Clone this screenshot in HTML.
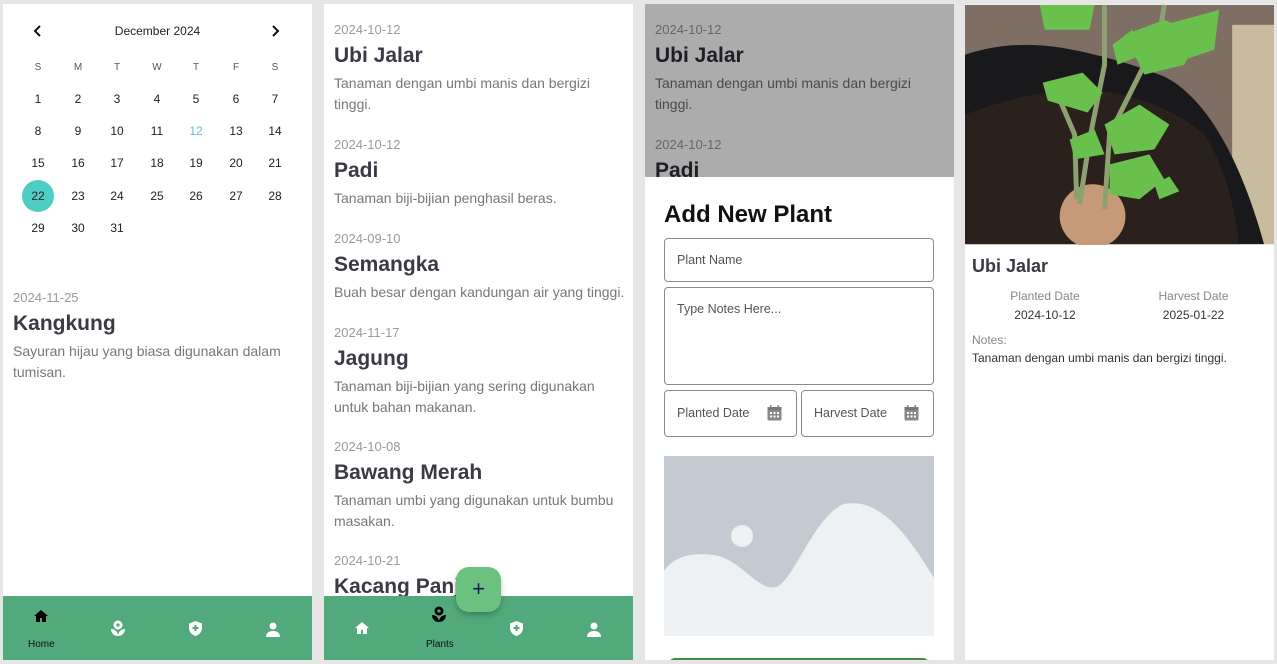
<!DOCTYPE html>
<html><head><meta charset="utf-8"><style>
*{margin:0;padding:0;box-sizing:border-box}
body{width:1277px;height:664px;background:#e6e6e6;position:relative;overflow:hidden;font-family:"Liberation Sans",sans-serif}
.p{position:absolute;top:4px;width:309px;height:656px;background:#fff;overflow:hidden}
.a{position:absolute;white-space:nowrap}
.c{position:absolute;width:30px;text-align:center;font-size:12px;color:#222}
.dt{font-size:13px;color:#9a9a9a}
.tt{font-size:21px;font-weight:bold;color:#3a3a44}
.ds{font-size:14px;color:#777;line-height:21px;white-space:normal}
.nav{position:absolute;left:0;top:592px;width:309px;height:64px;background:#52aa7c}
.inp{position:absolute;border:1px solid #8a8a8a;border-radius:4px;font-size:12.5px;color:#555}
</style></head><body>

<!-- Panel 1 -->
<div class="p" style="left:3px">
 <svg class="a" style="left:29px;top:20px" width="12" height="14" viewBox="0 0 12 14"><path d="M8 2L3 7l5 5" stroke="#111" stroke-width="2" fill="none"/></svg>
 <svg class="a" style="left:266px;top:20px" width="12" height="14" viewBox="0 0 12 14"><path d="M4 2l5 5-5 5" stroke="#111" stroke-width="2" fill="none"/></svg>
 <div class="a" style="left:0;width:309px;text-align:center;top:20px;font-size:12px;color:#222">December 2024</div>
 <div id="cal"></div>
 <div class="a" style="left:19px;top:176px;width:32px;height:32px;border-radius:50%;background:#4ecdc4"></div>
 <div class="a dt" style="left:10px;top:286px">2024-11-25</div>
 <div class="a tt" style="left:10px;top:308px">Kangkung</div>
 <div class="a ds" style="left:10px;top:337px;width:280px">Sayuran hijau yang biasa digunakan dalam tumisan.</div>
 <div class="nav">
  <svg class="a" style="left:30px;top:13px" width="16" height="14" viewBox="0 0 16 14"><path d="M8 1L1 7h2v6h4V9h2v4h4V7h2z" fill="#000"/></svg>
  <div class="a" style="left:25px;top:43px;font-size:10px;color:#111">Home</div>
  <svg class="a" style="left:107px;top:24px" width="16" height="17" viewBox="0 0 16 17"><circle cx="8" cy="5" r="4.5" fill="#fff"/><circle cx="8" cy="5" r="1.6" fill="#52aa7c"/><path d="M1 9c4 0 7 3 7 7-4 0-7-3-7-7zM15 9c-4 0-7 3-7 7 4 0 7-3 7-7z" fill="#fff"/></svg>
  <svg class="a" style="left:185px;top:24px" width="15" height="17" viewBox="0 0 15 17"><path d="M7.5 1L1 3.5v4.5c0 4 3 7 6.5 8 3.5-1 6.5-4 6.5-8V3.5z" fill="#fff"/><path d="M7.5 5v6M4.5 8h6" stroke="#52aa7c" stroke-width="2"/></svg>
  <svg class="a" style="left:262px;top:26px" width="16" height="15" viewBox="0 0 16 15"><circle cx="8" cy="4" r="3.5" fill="#fff"/><path d="M1 15c0-4 3-6 7-6s7 2 7 6z" fill="#fff"/></svg>
 </div>
</div>

<!-- Panel 2 -->
<div class="p" style="left:324px">
 <div class="a dt" style="left:10px;top:18px">2024-10-12</div>
 <div class="a tt" style="left:10px;top:40px">Ubi Jalar</div>
 <div class="a ds" style="left:10px;top:69px;width:270px">Tanaman dengan umbi manis dan bergizi tinggi.</div>
 <div class="a dt" style="left:10px;top:133px">2024-10-12</div>
 <div class="a tt" style="left:10px;top:155px">Padi</div>
 <div class="a ds" style="left:10px;top:184px;width:290px">Tanaman biji-bijian penghasil beras.</div>
 <div class="a dt" style="left:10px;top:227px">2024-09-10</div>
 <div class="a tt" style="left:10px;top:249px">Semangka</div>
 <div class="a ds" style="left:10px;top:278px;width:300px">Buah besar dengan kandungan air yang tinggi.</div>
 <div class="a dt" style="left:10px;top:321px">2024-11-17</div>
 <div class="a tt" style="left:10px;top:343px">Jagung</div>
 <div class="a ds" style="left:10px;top:372px;width:275px">Tanaman biji-bijian yang sering digunakan untuk bahan makanan.</div>
 <div class="a dt" style="left:10px;top:435px">2024-10-08</div>
 <div class="a tt" style="left:10px;top:457px">Bawang Merah</div>
 <div class="a ds" style="left:10px;top:486px;width:285px">Tanaman umbi yang digunakan untuk bumbu masakan.</div>
 <div class="a dt" style="left:10px;top:549px">2024-10-21</div>
 <div class="a tt" style="left:10px;top:571px">Kacang Panjang</div>
 <div class="nav">
  <svg class="a" style="left:30px;top:25px" width="16" height="14" viewBox="0 0 16 14"><path d="M8 1L1 7h2v6h4V9h2v4h4V7h2z" fill="#fff"/></svg>
  <svg class="a" style="left:107px;top:10px" width="16" height="17" viewBox="0 0 16 17"><circle cx="8" cy="5" r="4.5" fill="#000"/><circle cx="8" cy="5" r="1.6" fill="#52aa7c"/><path d="M1 9c4 0 7 3 7 7-4 0-7-3-7-7zM15 9c-4 0-7 3-7 7 4 0 7-3 7-7z" fill="#000"/></svg>
  <div class="a" style="left:102px;top:43px;font-size:10px;color:#111">Plants</div>
  <svg class="a" style="left:185px;top:24px" width="15" height="17" viewBox="0 0 15 17"><path d="M7.5 1L1 3.5v4.5c0 4 3 7 6.5 8 3.5-1 6.5-4 6.5-8V3.5z" fill="#fff"/><path d="M7.5 5v6M4.5 8h6" stroke="#52aa7c" stroke-width="2"/></svg>
  <svg class="a" style="left:262px;top:26px" width="16" height="15" viewBox="0 0 16 15"><circle cx="8" cy="4" r="3.5" fill="#fff"/><path d="M1 15c0-4 3-6 7-6s7 2 7 6z" fill="#fff"/></svg>
 </div>
 <div class="a" style="left:132px;top:563px;width:45px;height:45px;border-radius:13px;background:#6dc180;box-shadow:0 3px 6px rgba(0,0,0,.25);text-align:center;line-height:44px;font-size:22px;color:#1a1a5a">+</div>
</div>

<!-- Panel 3 -->
<div class="p" style="left:645px">
 <div class="a" style="left:0;top:0;width:309px;height:173px;background:#acacac;overflow:hidden">
  <div class="a dt" style="left:10px;top:18px;color:#666">2024-10-12</div>
  <div class="a tt" style="left:10px;top:40px;color:#1e1e24">Ubi Jalar</div>
  <div class="a ds" style="left:10px;top:69px;width:270px;color:#4a4a4a">Tanaman dengan umbi manis dan bergizi tinggi.</div>
  <div class="a dt" style="left:10px;top:133px;color:#666">2024-10-12</div>
  <div class="a tt" style="left:10px;top:155px;color:#1e1e24">Padi</div>
 </div>
 <div class="a" style="left:19px;top:197px;font-size:24px;font-weight:bold;color:#111">Add New Plant</div>
 <div class="inp" style="left:19px;top:234px;width:270px;height:44px;padding:14px 12px">Plant Name</div>
 <div class="inp" style="left:19px;top:283px;width:270px;height:98px;padding:14px 12px">Type Notes Here...</div>
 <div class="inp" style="left:19px;top:386px;width:133px;height:47px;padding:15px 12px">Planted Date</div>
 <div class="inp" style="left:156px;top:386px;width:133px;height:47px;padding:15px 12px">Harvest Date</div>
 <svg class="a" style="left:122px;top:401px" width="15" height="16" viewBox="0 0 15 16"><rect x="0.5" y="2" width="14" height="13.5" rx="1.5" fill="#888"/><rect x="0.5" y="2" width="14" height="3" fill="#777"/><g fill="#fff"><rect x="3" y="7" width="2" height="2"/><rect x="6.5" y="7" width="2" height="2"/><rect x="10" y="7" width="2" height="2"/><rect x="3" y="10.5" width="2" height="2"/><rect x="6.5" y="10.5" width="2" height="2"/><rect x="10" y="10.5" width="2" height="2"/></g><rect x="3" y="0" width="1.5" height="3" fill="#888"/><rect x="10.5" y="0" width="1.5" height="3" fill="#888"/></svg>
 <svg class="a" style="left:259px;top:401px" width="15" height="16" viewBox="0 0 15 16"><rect x="0.5" y="2" width="14" height="13.5" rx="1.5" fill="#888"/><rect x="0.5" y="2" width="14" height="3" fill="#777"/><g fill="#fff"><rect x="3" y="7" width="2" height="2"/><rect x="6.5" y="7" width="2" height="2"/><rect x="10" y="7" width="2" height="2"/><rect x="3" y="10.5" width="2" height="2"/><rect x="6.5" y="10.5" width="2" height="2"/><rect x="10" y="10.5" width="2" height="2"/></g><rect x="3" y="0" width="1.5" height="3" fill="#888"/><rect x="10.5" y="0" width="1.5" height="3" fill="#888"/></svg>
 <svg class="a" style="left:19px;top:452px" width="270" height="180" viewBox="0 0 270 180"><rect width="270" height="180" fill="#c3cad1"/><circle cx="78" cy="80" r="11" fill="#eef1f4"/><path d="M0 115C10 100 30 95 55 100 80 108 95 135 112 131 130 125 150 60 180 48 220 40 250 90 270 122V180H0z" fill="#eef1f4"/></svg>
 <div class="a" style="left:24px;top:654px;width:260px;height:12px;border-radius:10px;background:#3e8e3a"></div>
</div>

<!-- Panel 4 -->
<div class="p" style="left:965px">
 <svg class="a" style="left:0;top:0" width="309" height="241" viewBox="0 0 310 240">
  <rect width="310" height="240" fill="#7e6e64"/>
  <rect x="268" y="20" width="42" height="220" fill="#c9bb9e"/>
  <path d="M0 50C30 40 60 38 90 42 130 48 170 60 200 72 240 92 275 150 300 240H0z" fill="#19191b"/>
  <path d="M0 110C40 95 80 85 120 85 170 88 210 105 240 130 260 160 270 200 275 240H0z" fill="#2a201c"/>
  <ellipse cx="128" cy="212" rx="33" ry="32" fill="#c69a78"/>
  <g stroke="#8ca070" stroke-width="5" fill="none"><path d="M115 200L125 135 140 60 140 0"/><path d="M140 205L145 130 195 30 200 0"/><path d="M112 195L110 130 95 95"/></g>
  <g fill="#6ac04c">
   <path d="M78 78l40-10 20 20-15 20-40-12z"/><path d="M160 30l40-15 35 15-15 30-40 10z"/><path d="M200 20l55-15-5 40-30 10z"/>
   <path d="M140 120l35-20 30 20-15 25-40 5z"/><path d="M105 135l25-10 10 25-30 5z"/><path d="M145 160l40-10 15 25-25 20-30-5z"/>
   <path d="M75 0l55 0-5 25-45 0z"/><path d="M190 180l15-8 10 15-20 8z"/><path d="M148 40l20-15 10 25-25 10z"/>
  </g>
 </svg>
 <div class="a" style="left:7px;top:252px;font-size:18px;font-weight:bold;color:#3a3a44">Ubi Jalar</div>
 <div class="a" style="left:0;width:160px;text-align:center;top:285px;font-size:12px;color:#888">Planted Date</div>
 <div class="a" style="left:0;width:160px;text-align:center;top:304px;font-size:12px;color:#333">2024-10-12</div>
 <div class="a" style="left:150px;width:157px;text-align:center;top:285px;font-size:12px;color:#888">Harvest Date</div>
 <div class="a" style="left:150px;width:157px;text-align:center;top:304px;font-size:12px;color:#333">2025-01-22</div>
 <div class="a" style="left:7px;top:329px;font-size:12px;color:#888">Notes:</div>
 <div class="a" style="left:7px;top:347px;font-size:12px;color:#333">Tanaman dengan umbi manis dan bergizi tinggi.</div>
</div>

<script>
var xs=[35,75,114,154,193,233,272],ys=[99,131,163,196,228],h='';
var L=['S','M','T','W','T','F','S'];
for(var i=0;i<7;i++)h+='<div class="c" style="left:'+(xs[i]-15)+'px;top:58px;font-size:10px;color:#555">'+L[i]+'</div>';
for(var d=1;d<=31;d++){var k=d-1,c=k%7,r=Math.floor(k/7);
h+='<div class="c" style="left:'+(xs[c]-15)+'px;top:'+(ys[r]-11)+'px;z-index:2;color:'+(d==12?'#4ecdc4':'#222')+'">'+d+'</div>';}
document.getElementById('cal').innerHTML=h;
</script>
</body></html>
